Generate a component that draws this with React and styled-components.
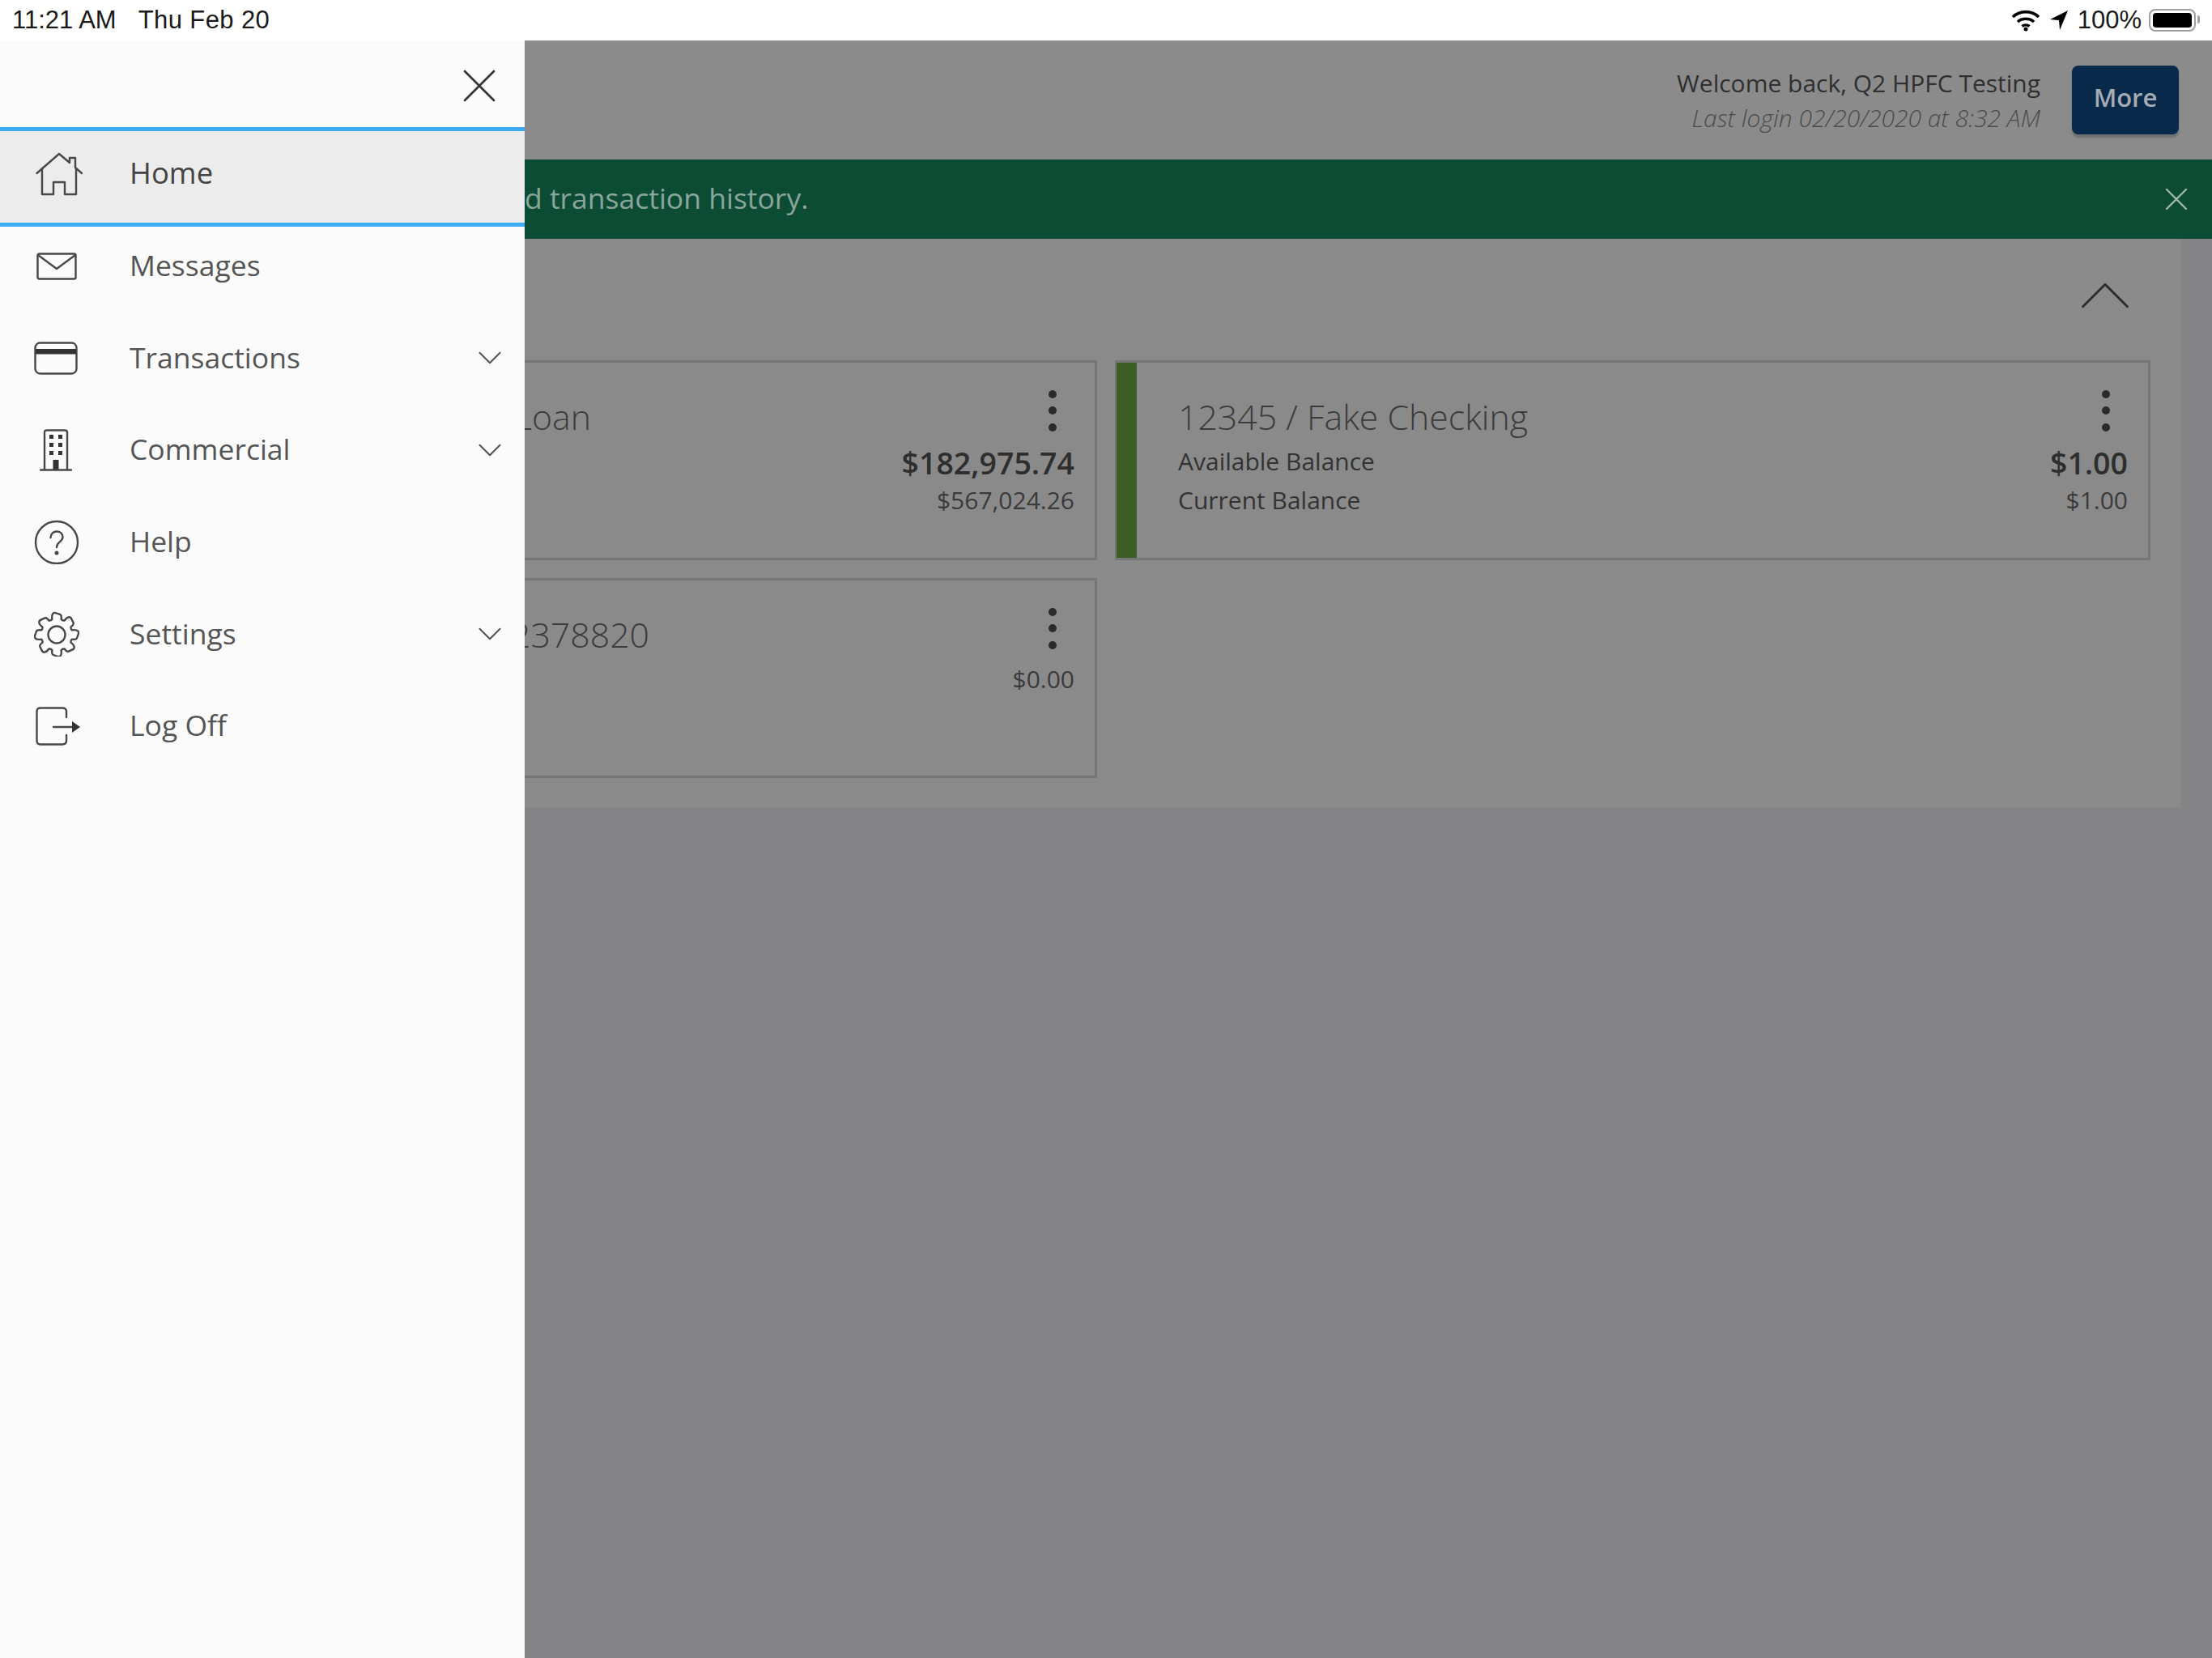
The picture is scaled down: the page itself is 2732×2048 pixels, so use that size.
import React from "react";
import styled, { createGlobalStyle } from "styled-components";
import { ChevronDown, ChevronUp, X } from "lucide-react";

const GlobalStyle = createGlobalStyle`
  html, body { margin: 0; padding: 0; background: #838385; }
  * { box-sizing: border-box; }
  body { font-family: "Open Sans", "Liberation Sans", sans-serif; }
`;

const Screen = styled.div`
  width: 2732px;
  height: 2048px;
  display: flex;
  flex-direction: column;
  overflow: hidden;
`;

const StatusBar = styled.div`
  height: 50px;
  flex: none;
  background: #fff;
  display: flex;
  align-items: center;
  justify-content: space-between;
  padding: 0 20px 0 15px;
  font-family: "Liberation Sans", Arial, sans-serif;
  font-size: 31px;
  color: #1a1a1a;
`;

const StatusLeft = styled.div`
  display: flex;
  gap: 27px;
`;

const DateText = styled.span`
  letter-spacing: 0.4px;
`;

const StatusRight = styled.div`
  display: flex;
  align-items: center;
`;

const Body = styled.div`
  flex: 1;
  display: flex;
  min-height: 0;
`;

const Drawer = styled.nav`
  width: 648px;
  flex: none;
  background: #fbfbfb;
  color: #4a4a4a;
`;

const DrawerTop = styled.div`
  height: 107px;
  display: flex;
  justify-content: flex-end;
  padding: 20px 20px 0 0;
  svg { display: block; }
`;

const Row = styled.div`
  height: ${(p) => p.$h}px;
  padding-bottom: ${(p) => p.$pb || 0}px;
  display: flex;
  align-items: center;
  position: relative;
  background: ${(p) => (p.$active ? "#ececec" : "transparent")};
  border-top: ${(p) => (p.$active ? "5px solid #3cabf5" : "none")};
  border-bottom: ${(p) => (p.$active ? "5px solid #3cabf5" : "none")};
`;

const IconSlot = styled.div`
  width: 160px;
  flex: none;
  padding-left: ${(p) => p.$left}px;
  svg { display: block; }
`;

const RowLabel = styled.span`
  flex: 1;
  padding-bottom: 3px;
  font-size: ${(p) => (p.$active ? 36.5 : 35.5)}px;
  font-weight: ${(p) => (p.$active ? 500 : 400)};
  line-height: 48px;
  color: ${(p) => (p.$active ? "#444" : "#555")};
`;

const RowChevron = styled(ChevronDown)`
  width: 50px;
  height: 50px;
  margin-right: 18px;
  color: #555;
`;

const Main = styled.main`
  flex: 1;
  min-width: 0;
  overflow: hidden;
  display: flex;
  flex-direction: column;
  background: #838385;
`;

const Header = styled.header`
  height: 147px;
  flex: none;
  background: #8b8b8b;
  display: flex;
  justify-content: flex-end;
  padding: 31px 41px 0 0;
`;

const Welcome = styled.div`
  text-align: right;
  margin-right: 39px;
`;

const WelcomeName = styled.div`
  font-size: 30px;
  line-height: 44px;
  color: #2f2f2f;
`;

const LastLogin = styled.div`
  font-size: 30px;
  line-height: 42px;
  font-style: italic;
  font-weight: 300;
  color: #4c4c4c;
`;

const MoreButton = styled.button`
  width: 132px;
  height: 85px;
  border: none;
  border-radius: 8px;
  padding: 0 0 7px;
  background: #0a2a4b;
  box-shadow: 0 4px 2px #6f7073;
  color: #a5acb4;
  font: 600 31px "Open Sans", sans-serif;
`;

const Banner = styled.div`
  height: 98px;
  flex: none;
  background: #0c4c35;
  display: flex;
  align-items: center;
  justify-content: space-between;
  padding: 0 20px 4px 0;
  color: #8aa69b;
  font-size: 35.5px;
`;

const BannerClose = styled(X)`
  width: 48px;
  height: 48px;
  margin-bottom: -4px;
  color: #9fb5ab;
`;

const Panel = styled.section`
  height: 703px;
  flex: none;
  margin-right: 38px;
  background: #8a8a8a;
`;

const PanelTop = styled.div`
  height: 150px;
  display: flex;
  justify-content: flex-end;
  padding: 15px 39px 0 0;
`;

const CollapseChevron = styled(ChevronUp)`
  width: 110px;
  height: 110px;
  color: #2b2b2b;
`;

const Cards = styled.div`
  display: grid;
  grid-template-columns: 707px 1279px;
  grid-auto-rows: 247px;
  gap: 22px;
`;

const Card = styled.article`
  display: flex;
  border: 3px solid #767676;
  border-left: ${(p) => (p.$clipped ? "none" : "2px solid #767676")};
`;

const Strip = styled.div`
  width: 25px;
  flex: none;
  background: #3d5f27;
`;

const CardBody = styled.div`
  flex: 1;
  padding: 27px 25px 0 ${(p) => p.$left}px;
`;

const CardHead = styled.div`
  display: flex;
  justify-content: space-between;
  height: 70px;
`;

const Title = styled.div`
  font-size: 42.8px;
  font-weight: 300;
  line-height: 54px;
  margin-top: 13px;
  margin-left: ${(p) => p.$shift || 0}px;
  color: #3c3c3c;
`;

const Kebab = styled.svg`
  width: 12px;
  height: 52px;
  margin: 7px 21px 0 0;
  fill: #2b2b2b;
`;

const BalanceRow = styled.div`
  display: flex;
  justify-content: space-between;
  align-items: center;
  height: 48px;
  font-size: 30px;
  color: #333;
`;

const Amount = styled.span`
  font-size: ${(p) => (p.$big ? 37.5 : 30)}px;
  font-weight: ${(p) => (p.$big ? 600 : 400)};
  margin-top: ${(p) => (p.$big ? 4 : 0)}px;
  color: ${(p) => (p.$big ? "#2e2e2e" : "#3a3a3a")};
`;

const BatteryBox = styled.div`
  width: 58px;
  height: 28px;
  padding: 3px;
  border: 2px solid #a0a0a0;
  border-radius: 8px;
  margin-left: 9px;
  position: relative;
  &::before {
    content: "";
    display: block;
    height: 100%;
    background: #000;
    border-radius: 4px;
  }
  &::after {
    content: "";
    position: absolute;
    right: -7px;
    top: 6px;
    width: 3px;
    height: 10px;
    background: #a0a0a0;
    border-radius: 0 3px 3px 0;
  }
`;

const Pct = styled.span`
  margin-left: 11px;
`;

const LocationSvg = styled.svg`
  margin-left: 11px;
`;

const iconStroke = { fill: "none", stroke: "#484848", strokeWidth: 2.4, strokeLinecap: "round", strokeLinejoin: "round" };

const HomeIcon = () => (
  <svg width="58" height="56" viewBox="0 0 58 56" {...iconStroke}>
    <path d="M1.500 27 L29 3 L42 14 V8 H49 V20 L57 27" />
    <path d="M8 21 V53 H22 V38 H36 V53 H50 V21" />
  </svg>
);

const MailIcon = () => (
  <svg width="50" height="34" viewBox="0 0 50 34" {...iconStroke}>
    <rect x="1.500" y="1.500" width="47" height="31" rx="2" />
    <path d="M2 3 L25 20 L48 3" />
  </svg>
);

const CardIcon = () => (
  <svg width="54" height="41" viewBox="0 0 54 41" {...iconStroke}>
    <rect x="1.500" y="1.500" width="51" height="38" rx="6" />
    <rect x="2" y="9" width="50" height="6.500" fill="#333" stroke="none" />
  </svg>
);

const BuildingIcon = () => (
  <svg width="40" height="52" viewBox="0 0 40 52" {...iconStroke}>
    <path d="M6 50 V4 Q6 1.500 9 1.500 H31 Q34 1.500 34 4 V50" />
    <path d="M1 50.500 H39" />
    <g fill="#333" stroke="none">
      <rect x="12" y="7" width="5" height="5" />
      <rect x="23" y="7" width="5" height="5" />
      <rect x="12" y="17" width="5" height="5" />
      <rect x="23" y="17" width="5" height="5" />
      <rect x="12" y="27" width="5" height="5" />
      <rect x="23" y="27" width="5" height="5" />
      <rect x="16.500" y="38" width="7" height="12" />
    </g>
  </svg>
);

const HelpIcon = () => (
  <svg width="56" height="56" viewBox="0 0 56 56" {...iconStroke}>
    <circle cx="28" cy="29" r="26" />
    <path d="M20.500 23 C20.500 13 35.500 13 35.500 22.500 C35.500 28 28 28.500 28 35" />
    <circle cx="28" cy="42" r="1.300" fill="#484848" />
  </svg>
);

// eight rounded teeth round a circle
const gearPath = () => {
  const c = 28;
  const pt = (r, a) => `${(c + r * Math.cos(a)).toFixed(2)} ${(c + r * Math.sin(a)).toFixed(2)}`;
  const step = Math.PI / 4;
  let d = "";
  for (let i = 0; i < 8; i++) {
    const a = i * step - Math.PI / 2;
    const start = pt(20, a - step * 0.36);
    if (i === 0) d += `M${start} `;
    d += `C${pt(27, a - step * 0.32)} ${pt(28.500, a - step * 0.16)} ${pt(26.500, a)} `;
    d += `S${pt(27, a + step * 0.32)} ${pt(20, a + step * 0.36)} `;
    d += `Q${pt(18.500, a + step * 0.5)} ${pt(20, a + step * 0.64)} `;
  }
  return d + "Z";
};

const GearIcon = () => (
  <svg width="56" height="56" viewBox="0 -1 56 56" {...iconStroke}>
    <path d={gearPath()} />
    <circle cx="28" cy="28" r="10.500" />
  </svg>
);

const LogOffIcon = () => (
  <svg width="56" height="48" viewBox="0 0 56 48" {...iconStroke}>
    <path d="M38 13 V6 Q38 1.500 33 1.500 H6 Q1.500 1.500 1.500 6 V42 Q1.500 46.500 6 46.500 H33 Q38 46.500 38 42 V35" />
    <path d="M22 25 H46" />
    <path d="M45 18 L55 25 L45 32 Z" fill="#333" stroke="none" />
  </svg>
);

const WifiIcon = () => (
  <svg width="36" height="28" viewBox="0 0 36 28" fill="none" stroke="#000" strokeWidth="3.600">
    <path d="M2 10 C11 1.500 25 1.500 34 10" />
    <path d="M8 16 C13.500 11 22.500 11 28 16" />
    <path d="M13.500 21.500 C16 19.500 20 19.500 22.500 21.500" />
    <circle cx="18" cy="25" r="2.500" fill="#000" stroke="none" />
  </svg>
);

const LocationIcon = () => (
  <LocationSvg width="24" height="26" viewBox="0 0 24 26">
    <path d="M23 1 L1 12 L12 13 L13 25 Z" fill="#000" />
  </LocationSvg>
);

const Dots = () => (
  <Kebab viewBox="0 0 12 52">
    <circle cx="6" cy="5" r="5" />
    <circle cx="6" cy="25" r="5" />
    <circle cx="6" cy="46" r="5" />
  </Kebab>
);

const menu = [
  { label: "Home", icon: <HomeIcon />, left: 44, h: 123, pb: 8, active: true },
  { label: "Messages", icon: <MailIcon />, left: 45, h: 105, pb: 8 },
  { label: "Transactions", icon: <CardIcon />, left: 42, h: 114, chevron: true },
  { label: "Commercial", icon: <BuildingIcon />, left: 49, h: 113, chevron: true },
  { label: "Help", icon: <HelpIcon />, left: 42, h: 114 },
  { label: "Settings", icon: <GearIcon />, left: 42, h: 114, chevron: true },
  { label: "Log Off", icon: <LogOffIcon />, left: 44, h: 113 },
];

export default function App() {
  return (
    <Screen>
      <GlobalStyle />
      <StatusBar>
        <StatusLeft>
          <span>11:21 AM</span>
          <DateText>Thu Feb 20</DateText>
        </StatusLeft>
        <StatusRight>
          <WifiIcon />
          <LocationIcon />
          <Pct>100%</Pct>
          <BatteryBox />
        </StatusRight>
      </StatusBar>
      <Body>
        <Drawer>
          <DrawerTop>
            <X size={72} strokeWidth={0.9} color="#333" />
          </DrawerTop>
          {menu.map((item) => (
            <Row key={item.label} $h={item.h} $pb={item.pb} $active={item.active}>
              <IconSlot $left={item.left}>{item.icon}</IconSlot>
              <RowLabel $active={item.active}>{item.label}</RowLabel>
              {item.chevron && <RowChevron strokeWidth={1} />}
            </Row>
          ))}
        </Drawer>
        <Main>
          <Header>
            <Welcome>
              <WelcomeName>Welcome back, Q2 HPFC Testing</WelcomeName>
              <LastLogin>Last login 02/20/2020 at 8:32 AM</LastLogin>
            </Welcome>
            <MoreButton>More</MoreButton>
          </Header>
          <Banner>
            <span>d transaction history.</span>
            <BannerClose strokeWidth={1.2} />
          </Banner>
          <Panel>
            <PanelTop>
              <CollapseChevron strokeWidth={0.6} />
            </PanelTop>
            <Cards>
              <Card $clipped>
                <CardBody $left={0}>
                  <CardHead>
                    <Title $shift={-13}>Loan</Title>
                    <Dots />
                  </CardHead>
                  <BalanceRow>
                    <span />
                    <Amount $big>$182,975.74</Amount>
                  </BalanceRow>
                  <BalanceRow>
                    <span />
                    <Amount>$567,024.26</Amount>
                  </BalanceRow>
                </CardBody>
              </Card>
              <Card>
                <Strip />
                <CardBody $left={51}>
                  <CardHead>
                    <Title>12345 / Fake Checking</Title>
                    <Dots />
                  </CardHead>
                  <BalanceRow>
                    <span>Available Balance</span>
                    <Amount $big>$1.00</Amount>
                  </BalanceRow>
                  <BalanceRow>
                    <span>Current Balance</span>
                    <Amount>$1.00</Amount>
                  </BalanceRow>
                </CardBody>
              </Card>
              <Card $clipped>
                <CardBody $left={0}>
                  <CardHead>
                    <Title $shift={-17}>2378820</Title>
                    <Dots />
                  </CardHead>
                  <BalanceRow>
                    <span />
                    <Amount>$0.00</Amount>
                  </BalanceRow>
                </CardBody>
              </Card>
            </Cards>
          </Panel>
        </Main>
      </Body>
    </Screen>
  );
}
